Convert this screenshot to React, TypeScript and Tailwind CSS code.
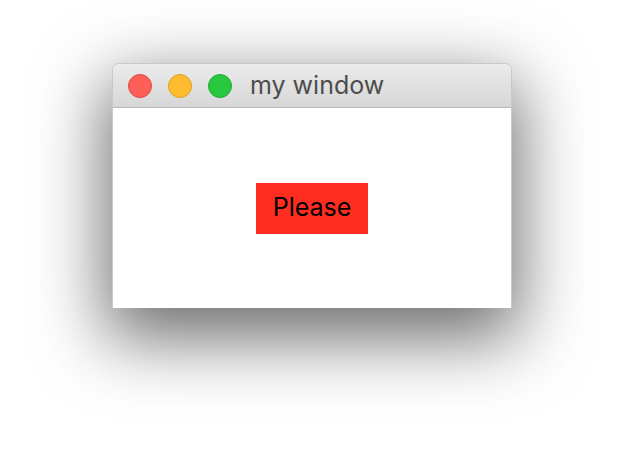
import React from "react";

export default function App() {
  return (
    <div className="w-[624px] h-[468px] bg-white flex justify-center pt-[63px] overflow-hidden">
      <div className="w-[400px] h-[245px] flex flex-col rounded-t-[7px] bg-white shadow-[0_24px_70px_6px_rgba(0,0,0,0.58)] border border-[#c8c8c8] border-b-0">
        <div className="h-[44px] flex items-center pl-[15px] rounded-t-[7px] bg-gradient-to-b from-[#ececec] to-[#d6d6d6] border-b border-[#b9b9b9]">
          <div className="flex items-center gap-[16px]">
            <div className="w-[24px] h-[24px] rounded-full bg-[#fe5f57] border border-[#e1473f]" />
            <div className="w-[24px] h-[24px] rounded-full bg-[#febc2e] border border-[#dfa123]" />
            <div className="w-[24px] h-[24px] rounded-full bg-[#28c840] border border-[#1dad2b]" />
          </div>
          <span
            className="ml-[18px] text-[25px] text-[#4d4d4d] leading-none"
            style={{ fontFamily: "Inter, 'Noto Sans', sans-serif" }}
          >
            my window
          </span>
        </div>
        <div className="flex-1 bg-white flex items-center justify-center">
          <div
            className="w-[112px] h-[51px] bg-[#ff2d1f] flex items-center justify-center text-[25px] text-black"
            style={{ fontFamily: "Inter, 'Noto Sans', sans-serif" }}
          >
            Please
          </div>
        </div>
      </div>
    </div>
  );
}
